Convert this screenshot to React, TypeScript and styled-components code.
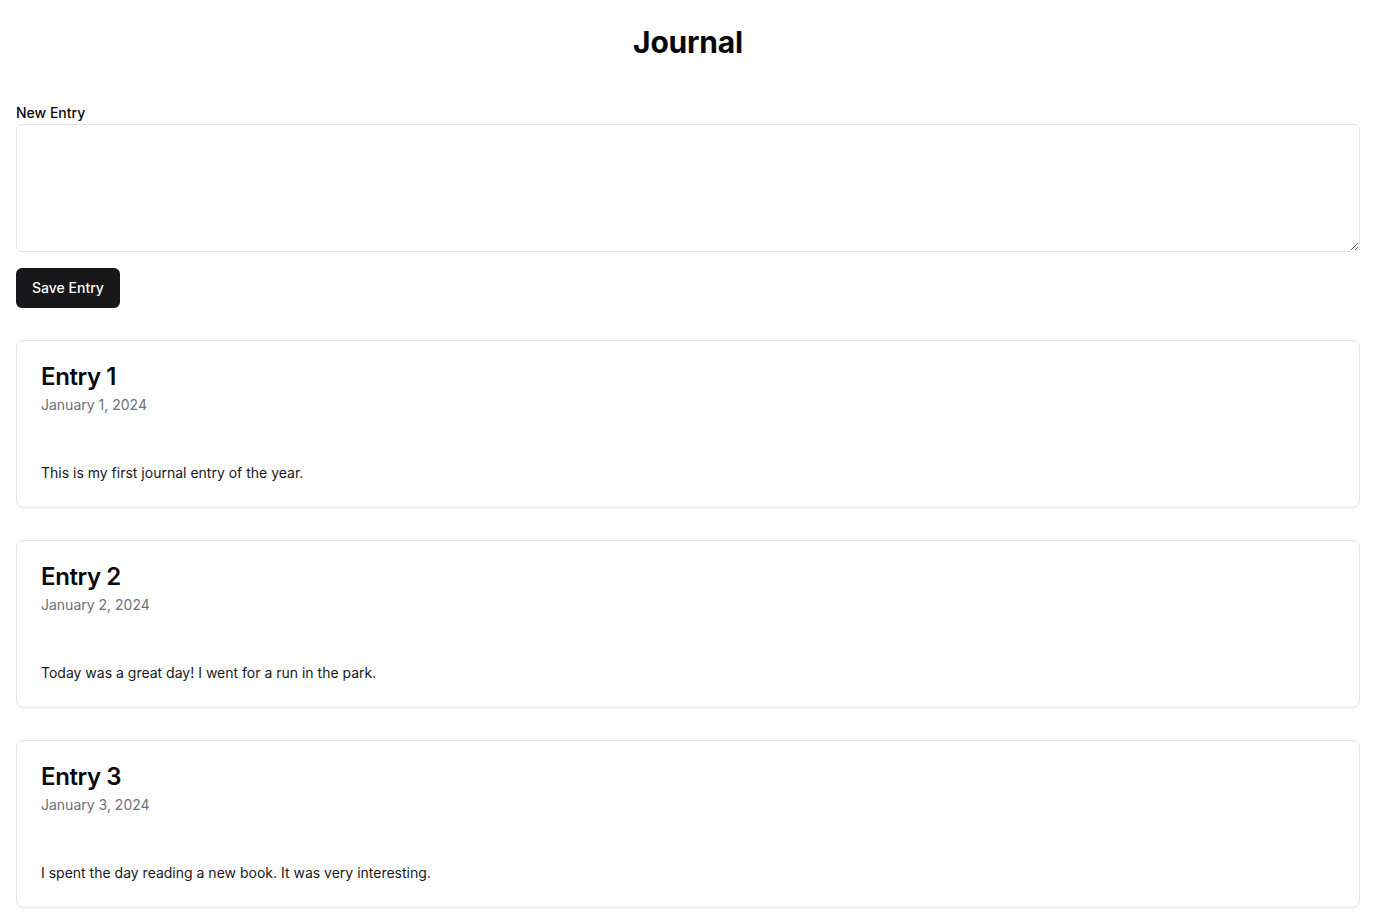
import React, { useState } from "react";
import styled, { createGlobalStyle } from "styled-components";

const GlobalStyle = createGlobalStyle`
  * {
    box-sizing: border-box;
  }
  body {
    margin: 0;
    background: #ffffff;
    color: #09090b;
    font-family: Inter, "Noto Sans", "Liberation Sans", sans-serif;
  }
`;

const Page = styled.div`
  padding: 24px 16px 16px;
  display: flex;
  flex-direction: column;
`;

const Title = styled.h1`
  margin: 0 0 46px;
  font-size: 30px;
  line-height: 36px;
  font-weight: 700;
  text-align: center;
  letter-spacing: -0.2px;
`;

const Form = styled.div`
  display: flex;
  flex-direction: column;
  align-items: flex-start;
`;

const Label = styled.label`
  font-size: 14px;
  line-height: 14px;
  font-weight: 500;
  margin-bottom: 4px;
`;

const TextArea = styled.textarea`
  width: 100%;
  height: 128px;
  border: 1px solid #e4e4e7;
  border-radius: 6px;
  padding: 8px 12px;
  font-family: inherit;
  font-size: 14px;
  outline: none;
  resize: vertical;
  display: block;
`;

const SaveButton = styled.button`
  margin-top: 16px;
  height: 40px;
  padding: 0 16px 1px;
  border: none;
  border-radius: 6px;
  background: #18181b;
  color: #fafafa;
  font-family: inherit;
  font-size: 14px;
  font-weight: 500;
  cursor: pointer;
`;

const EntryList = styled.div`
  margin-top: 32px;
  display: flex;
  flex-direction: column;
  gap: 32px;
`;

const Card = styled.div`
  border: 1px solid #e4e4e7;
  border-radius: 8px;
  background: #ffffff;
  box-shadow: 0 1px 2px rgba(0, 0, 0, 0.05);
`;

const CardHeader = styled.div`
  padding: 24px;
  display: flex;
  flex-direction: column;
  gap: 6px;
`;

const CardTitle = styled.h3`
  margin: 0;
  font-size: 24px;
  line-height: 24px;
  font-weight: 600;
  letter-spacing: -0.4px;
`;

const CardDate = styled.p`
  margin: 0;
  font-size: 14px;
  line-height: 20px;
  color: #71717a;
`;

const CardContent = styled.div`
  padding: 24px;
  font-size: 14px;
  line-height: 20px;
  color: #18181b;
`;

interface Entry {
  id: number;
  date: string;
  text: string;
}

const initialEntries: Entry[] = [
  { id: 1, date: "January 1, 2024", text: "This is my first journal entry of the year." },
  { id: 2, date: "January 2, 2024", text: "Today was a great day! I went for a run in the park." },
  { id: 3, date: "January 3, 2024", text: "I spent the day reading a new book. It was very interesting." },
];

export default function App() {
  const [entries, setEntries] = useState<Entry[]>(initialEntries);
  const [draft, setDraft] = useState("");

  const save = () => {
    if (!draft.trim()) return;
    const date = new Date().toLocaleDateString("en-US", {
      year: "numeric",
      month: "long",
      day: "numeric",
    });
    setEntries([...entries, { id: entries.length + 1, date, text: draft }]);
    setDraft("");
  };

  return (
    <>
      <GlobalStyle />
      <Page>
        <Title>Journal</Title>
        <Form>
          <Label htmlFor="entry">New Entry</Label>
          <TextArea
            id="entry"
            value={draft}
            onChange={(e) => setDraft(e.target.value)}
          />
          <SaveButton onClick={save}>Save Entry</SaveButton>
        </Form>
        <EntryList>
          {entries.map((entry) => (
            <Card key={entry.id}>
              <CardHeader>
                <CardTitle>Entry {entry.id}</CardTitle>
                <CardDate>{entry.date}</CardDate>
              </CardHeader>
              <CardContent>{entry.text}</CardContent>
            </Card>
          ))}
        </EntryList>
      </Page>
    </>
  );
}
